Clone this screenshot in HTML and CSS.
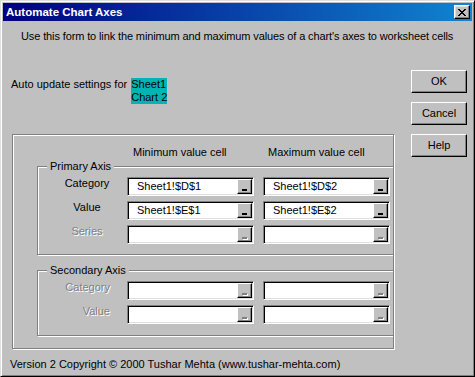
FILE: index.html
```html
<!DOCTYPE html>
<html>
<head>
<meta charset="utf-8">
<title>Automate Chart Axes</title>
<link rel="stylesheet" href="styles.css">
</head>
<body>
<div class="window">
  <div class="titlebar">
    <span class="title">Automate Chart Axes</span>
    <div class="close">
      <svg width="8" height="7" viewBox="0 0 8 7"><path fill="#000" d="M0 0h2v1H0zM6 0h2v1H6zM1 1h2v1H1zM5 1h2v1H5zM2 2h4v1H2zM3 3h2v1H3zM2 4h4v1H2zM1 5h2v1H1zM5 5h2v1H5zM0 6h2v1H0zM6 6h2v1H6z"/></svg>
    </div>
  </div>
  <div class="content">
    <p class="desc">Use this form to link the minimum and maximum values of a chart's axes to worksheet cells</p>
    <div class="main">
      <div class="leftcol">
        <div class="auto"><span>Auto update settings for</span><span class="sel">Sheet1<br>Chart 2</span></div>
        <div class="frame">
          <div class="hdr"><span class="hmin">Minimum value cell</span><span>Maximum value cell</span></div>
          <div class="group">
            <span class="legend">Primary Axis</span>
            <div class="row">
              <span class="lbl">Category</span>
              <div class="field"><span>Sheet1!$D$1</span><div class="pick"><i></i></div></div>
              <div class="field"><span>Sheet1!$D$2</span><div class="pick"><i></i></div></div>
            </div>
            <div class="row">
              <span class="lbl">Value</span>
              <div class="field"><span>Sheet1!$E$1</span><div class="pick"><i></i></div></div>
              <div class="field"><span>Sheet1!$E$2</span><div class="pick"><i></i></div></div>
            </div>
            <div class="row">
              <span class="lbl dis">Series</span>
              <div class="field"><span></span><div class="pick dis"><i></i></div></div>
              <div class="field"><span></span><div class="pick dis"><i></i></div></div>
            </div>
          </div>
          <div class="group secondary">
            <span class="legend">Secondary Axis</span>
            <div class="row">
              <span class="lbl right dis">Category</span>
              <div class="field"><span></span><div class="pick dis"><i></i></div></div>
              <div class="field"><span></span><div class="pick dis"><i></i></div></div>
            </div>
            <div class="row">
              <span class="lbl right dis">Value</span>
              <div class="field"><span></span><div class="pick dis"><i></i></div></div>
              <div class="field"><span></span><div class="pick dis"><i></i></div></div>
            </div>
          </div>
        </div>
      </div>
      <div class="btns">
        <div class="btn">OK</div>
        <div class="btn">Cancel</div>
        <div class="btn">Help</div>
      </div>
    </div>
    <p class="footer">Version 2 Copyright © 2000 Tushar Mehta (www.tushar-mehta.com)</p>
  </div>
</div>
</body>
</html>
```
FILE: styles.css
```css
* { box-sizing: border-box; }
html, body { margin: 0; padding: 0; }
body {
  width: 475px; height: 377px; overflow: hidden;
  font-family: "Liberation Sans", Arial, sans-serif;
  font-size: 11px; line-height: 13px; color: #000;
  background: #c0c0c0;
}
.window {
  width: 475px; height: 377px;
  background: #c0c0c0;
  border: 1px solid; border-color: #dfdfdf #000 #000 #dfdfdf;
  box-shadow: inset 1px 1px 0 #fff, inset -1px -1px 0 #808080;
  padding: 2px;
  display: flex; flex-direction: column;
}
.titlebar {
  height: 18px; flex: none;
  background: linear-gradient(to right, #000080, #1084d0);
  display: flex; align-items: center; justify-content: space-between;
  padding: 0 2px 0 3px;
}
.title { color: #fff; font-weight: bold; font-size: 11.5px; }
.close {
  width: 16px; height: 14px;
  background: #c0c0c0;
  border: 1px solid; border-color: #fff #000 #000 #fff;
  box-shadow: inset -1px -1px 0 #808080, inset 1px 1px 0 #dfdfdf;
  display: flex; align-items: center; justify-content: center;
}
.close svg { display: block; }
.content { flex: 1; }
.desc { margin: 9px 0 0 18px; letter-spacing: -0.12px; }
.main { display: flex; margin-top: 27px; }
.leftcol { width: 391px; flex: none; }
.auto { display: flex; align-items: flex-start; margin: 8px 0 0 8px; }
.sel { background: #00b4b4; margin-left: 4px; }
.frame {
  margin: 30px 0 0 9px;
  width: 382px; height: 215px;
  border: 1px solid #808080;
  box-shadow: inset 1px 1px 0 #fff, 1px 1px 0 #fff;
  padding: 11px 0 0 24px;
  overflow: hidden;
}
.hdr { display: flex; padding-left: 96px; height: 13px; }
.hmin { width: 135px; }
.group {
  position: relative;
  margin-top: 7px; margin-right: -10px;
  border: 1px solid #808080;
  box-shadow: inset 1px 1px 0 #fff, 1px 1px 0 #fff;
  padding: 10px 0;
  display: flex; flex-direction: column; gap: 5px;
}
.group.secondary { margin-top: 15px; padding-bottom: 11px; }
.legend {
  position: absolute; top: -7px; left: 9px;
  padding: 0 3px; background: #c0c0c0;
}
.row { display: flex; column-gap: 9px; align-items: flex-start; }
.lbl { width: 80px; padding: 0 6px 0 24px; text-align: center; }
.lbl.right { text-align: right; padding-right: 8px; }
.dis { color: #808080; text-shadow: 1px 1px 0 #fff; }
.field {
  width: 127px; height: 19px;
  background: #fff;
  border: 1px solid; border-color: #808080 #fff #fff #808080;
  box-shadow: inset 1px 1px 0 #000, inset -1px -1px 0 #dfdfdf;
  display: flex; align-items: center; justify-content: space-between;
  padding-left: 9px;
}
.pick {
  width: 15px; height: 15px; margin-right: 1px;
  background: #c0c0c0;
  border: 1px solid; border-color: #fff #000 #000 #fff;
  box-shadow: inset -1px -1px 0 #808080;
  display: flex; align-items: flex-end; justify-content: center;
  padding-bottom: 2px;
}
.pick i { display: block; width: 5px; height: 2px; background: #000; margin-right: 1px; }
.pick.dis i { background: #808080; box-shadow: 1px 1px 0 #fff; }
.btns { margin-left: 17px; display: flex; flex-direction: column; gap: 9px; }
.btn {
  width: 56px; height: 23px;
  background: #c0c0c0;
  border: 1px solid; border-color: #fff #000 #000 #fff;
  box-shadow: inset -1px -1px 0 #808080;
  display: flex; align-items: center; justify-content: center;
}
.footer { margin: 9px 0 0 7px; }
```
